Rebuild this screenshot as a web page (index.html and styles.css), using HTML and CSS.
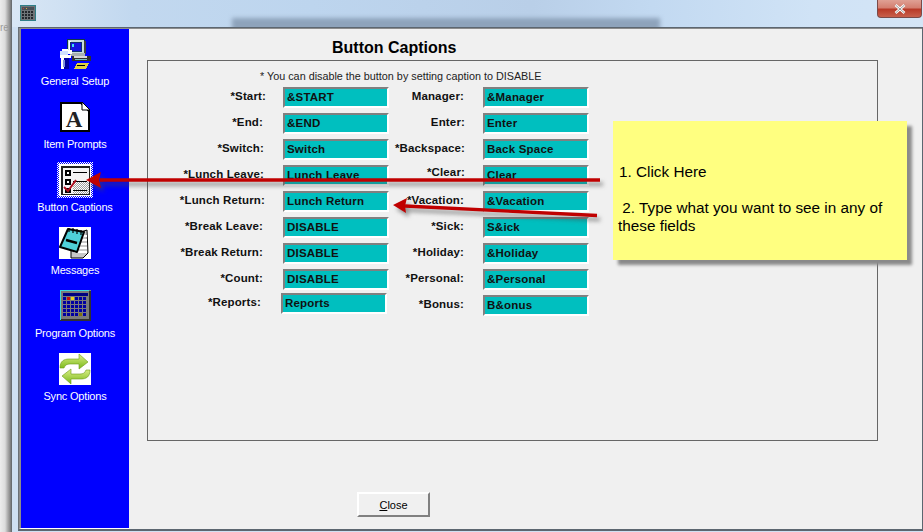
FILE: index.html
```html
<!DOCTYPE html>
<html lang="en">
<head>
<meta charset="utf-8">
<title>Button Captions</title>
<link rel="stylesheet" href="styles.css">
</head>
<body>
<div class="shell">
  <div class="behind"><span class="behind-text">re</span></div>
  <div class="window">
    <header class="titlebar">
      <div class="title-blur"></div>
      <svg class="app-icon" width="16" height="16" viewBox="0 0 16 16" shape-rendering="crispEdges">
        <rect width="16" height="16" fill="#2f7f88"/>
        <rect x="1" y="1" width="14" height="14" fill="#6f7477"/>
        <rect x="2" y="2" width="12" height="3" fill="#4a4f55"/>
        <rect x="3" y="3" width="1" height="1" fill="#c04030"/><rect x="6" y="3" width="1" height="1" fill="#d0b040"/>
        <g fill="#23272c">
          <rect x="2" y="6" width="2" height="2"/><rect x="5" y="6" width="2" height="2"/><rect x="8" y="6" width="2" height="2"/><rect x="11" y="6" width="2" height="2"/>
          <rect x="2" y="9" width="2" height="2"/><rect x="5" y="9" width="2" height="2"/><rect x="8" y="9" width="2" height="2"/><rect x="11" y="9" width="2" height="2"/>
          <rect x="2" y="12" width="2" height="2"/><rect x="5" y="12" width="2" height="2"/><rect x="8" y="12" width="2" height="2"/><rect x="11" y="12" width="2" height="2"/>
        </g>
      </svg>
      <div class="win-close">
        <svg width="12" height="10" viewBox="0 0 12 10"><path d="M1.5 1 L10.5 9 M10.5 1 L1.5 9" stroke="#fff" stroke-width="2.6"/><path d="M1.5 1 L10.5 9 M10.5 1 L1.5 9" stroke="#6b6b6b" stroke-width=".7"/></svg>
      </div>
    </header>
    <div class="frame">
      <div class="client">
        <nav class="sidebar">
          <div class="nav-item">
            <div class="nav-icon">
              <svg width="32" height="32" viewBox="0 0 32 32" shape-rendering="crispEdges">
                <rect x="8" y="1" width="18" height="15" fill="#103848"/>
                <rect x="9" y="2" width="16" height="13" fill="#c8dede"/>
                <rect x="10" y="3" width="2" height="11" fill="#fff"/>
                <rect x="11" y="4" width="12" height="10" fill="#103070"/>
                <rect x="12" y="5" width="10" height="8" fill="#1414e0"/>
                <rect x="13" y="6" width="2" height="3" fill="#40e0f0"/>
                <rect x="25" y="3" width="2" height="13" fill="#404040"/>
                <rect x="11" y="15" width="15" height="3" fill="#a8b0b0"/>
                <rect x="13" y="18" width="19" height="5" fill="#303030"/>
                <rect x="15" y="18" width="13" height="2" fill="#d8d8d8"/>
                <rect x="16" y="21" width="12" height="1" fill="#80c0c0"/>
                <path d="M18 25 H30 L27 31 H15 Z" fill="#e0d040"/>
                <rect x="18" y="27" width="8" height="1" fill="#000"/>
                <rect x="1" y="13" width="8" height="4" fill="#d0e0ff"/>
                <rect x="3" y="11" width="6" height="2" fill="#fff"/>
                <rect x="9" y="12" width="4" height="4" fill="#fff"/>
                <rect x="1" y="17" width="11" height="3" fill="#fff"/>
                <rect x="2" y="20" width="6" height="11" fill="#fff"/>
                <rect x="5" y="20" width="5" height="11" fill="#0000a0"/>
                <rect x="4" y="22" width="2" height="7" fill="#8090e0"/>
              </svg>
            </div>
            <span class="nav-label">General Setup</span>
          </div>
          <div class="nav-item">
            <div class="nav-icon">
              <svg width="32" height="32" viewBox="0 0 32 32">
                <path d="M2 2 H22 L30 10 V30 H2 Z" fill="#fff" stroke="#000" stroke-width="2"/>
                <path d="M23 1 V9 H31 L31 1 Z" fill="#0000ff"/>
                <path d="M23 1 L31 9 H23 Z" fill="#fff" stroke="#000" stroke-width="1"/>
                <text x="15" y="26" class="glyph-a">A</text>
              </svg>
            </div>
            <span class="nav-label">Item Prompts</span>
          </div>
          <div class="nav-item">
            <div class="nav-icon">
              <svg class="tall-icon" width="36" height="36" viewBox="0 0 36 36" shape-rendering="crispEdges">
                <defs>
                  <pattern id="chk" width="2" height="2" patternUnits="userSpaceOnUse">
                    <rect width="2" height="2" fill="#fff"/><rect width="1" height="1" fill="#0000ff"/><rect x="1" y="1" width="1" height="1" fill="#0000ff"/>
                  </pattern>
                  <pattern id="gry" width="2" height="2" patternUnits="userSpaceOnUse">
                    <rect width="2" height="2" fill="#fff"/><rect width="1" height="1" fill="#a0a0a0"/><rect x="1" y="1" width="1" height="1" fill="#a0a0a0"/>
                  </pattern>
                </defs>
                <rect width="36" height="36" fill="url(#chk)"/>
                <rect x="2" y="2" width="32" height="32" fill="#fff"/>
                <rect x="4" y="4" width="29" height="29" fill="#202020"/>
                <rect x="6" y="6" width="26" height="26" fill="#f4f4f4"/>
                <rect x="16" y="20" width="16" height="12" fill="url(#gry)"/>
                <rect x="8" y="8" width="6" height="6" fill="#000"/><rect x="10" y="10" width="2" height="2" fill="#fff"/>
                <rect x="8" y="17" width="6" height="6" fill="#000"/><rect x="10" y="19" width="2" height="2" fill="#fff"/>
                <rect x="8" y="26" width="6" height="5" fill="#000"/>
                <rect x="16" y="10" width="14" height="1" fill="#000"/>
                <rect x="16" y="19" width="14" height="1" fill="#000"/>
                <rect x="16" y="28" width="14" height="1" fill="#000"/>
                <path d="M7 25 L11 29 L19 18" fill="none" stroke="#b01020" stroke-width="2" shape-rendering="auto"/>
              </svg>
            </div>
            <span class="nav-label">Button Captions</span>
          </div>
          <div class="nav-item">
            <div class="nav-icon">
              <svg width="32" height="32" viewBox="0 0 32 32">
                <rect width="32" height="32" fill="#fff"/>
                <path d="M12 8 L28 3 L29 26 L24 31 H12 Z" fill="#c8c8c8" stroke="#000" stroke-width="1"/>
                <path d="M19 9 H28 M18 13 H28 M17 17 H28 M16 21 H28 M15 25 H28" stroke="#fff" stroke-width="2"/>
                <path d="M9 2 L25 5 L18 25 L1 20 Z" fill="#4fd0d8" stroke="#000" stroke-width="2" stroke-linejoin="round"/>
                <path d="M7 13 L18 16" stroke="#000" stroke-width="2.4"/>
                <path d="M10 1 V5 M14 1 V6 M18 2 V7 M22 3 V8" stroke="#000" stroke-width="1.2"/>
              </svg>
            </div>
            <span class="nav-label">Messages</span>
          </div>
          <div class="nav-item">
            <div class="nav-icon">
              <svg class="cal-icon" width="32" height="32" viewBox="0 0 32 32" shape-rendering="crispEdges">
                <rect x="1" y="0" width="31" height="31" fill="#7a7a7a"/>
                <rect x="30" y="1" width="2" height="30" fill="#303030"/>
                <rect x="1" y="29" width="31" height="2" fill="#303030"/>
                <rect x="1" y="0" width="29" height="1" fill="#40d8e0"/>
                <rect x="1" y="0" width="1" height="30" fill="#40d8e0"/>
                <rect x="4" y="3" width="25" height="3" fill="#000080"/>
                <g fill="#0000a0" transform="translate(1 0)">
                  <rect x="3" y="7" width="3" height="3"/><rect x="7" y="7" width="3" height="3" fill="#c01010"/><rect x="11" y="7" width="3" height="3" fill="#e8d020"/><rect x="15" y="7" width="3" height="3"/><rect x="19" y="7" width="3" height="3"/><rect x="23" y="7" width="3" height="3"/>
                  <rect x="3" y="11" width="3" height="3"/><rect x="7" y="11" width="3" height="3"/><rect x="11" y="11" width="3" height="3"/><rect x="15" y="11" width="3" height="3"/><rect x="19" y="11" width="3" height="3"/><rect x="23" y="11" width="3" height="3"/>
                  <rect x="3" y="15" width="3" height="3"/><rect x="7" y="15" width="3" height="3"/><rect x="11" y="15" width="3" height="3"/><rect x="15" y="15" width="3" height="3"/><rect x="19" y="15" width="3" height="3"/><rect x="23" y="15" width="3" height="3"/>
                  <rect x="3" y="19" width="3" height="3"/><rect x="7" y="19" width="3" height="3"/><rect x="11" y="19" width="3" height="3"/><rect x="15" y="19" width="3" height="3"/><rect x="19" y="19" width="3" height="3"/><rect x="23" y="19" width="3" height="3"/>
                  <rect x="3" y="23" width="3" height="3"/><rect x="7" y="23" width="3" height="3"/><rect x="11" y="23" width="3" height="3"/><rect x="15" y="23" width="3" height="3"/><rect x="19" y="23" width="3" height="3" fill="#807010"/><rect x="23" y="23" width="3" height="3"/>
                </g>
              </svg>
            </div>
            <span class="nav-label">Program Options</span>
          </div>
          <div class="nav-item">
            <div class="nav-icon">
              <svg width="32" height="32" viewBox="0 0 32 32">
                <defs>
                  <linearGradient id="grn" x1="0" y1="0" x2="0" y2="1"><stop offset="0" stop-color="#dcf088"/><stop offset="1" stop-color="#78b818"/></linearGradient>
                </defs>
                <rect width="32" height="32" fill="#fff"/>
                <path d="M1 15 C1 8 5 6 10 6 H20 V1 L29 9 L20 16 V11 H11 C8 11 6 12 5 15 Z" fill="url(#grn)" stroke="#6c9a18" stroke-width=".6"/>
                <path d="M31 17 C31 24 27 26 22 26 H12 V31 L3 23 L12 16 V21 H21 C24 21 26 20 27 17 Z" fill="url(#grn)" stroke="#6c9a18" stroke-width=".6"/>
              </svg>
            </div>
            <span class="nav-label">Sync Options</span>
          </div>
        </nav>
        <main class="content">
          <h1 class="heading">Button Captions</h1>
          <section class="group">
            <p class="hint">* You can disable the button by setting caption to DISABLE</p>
            <div class="fields">
              <label class="cap r0">*Start:</label><div class="field">&amp;START</div>
              <label class="cap cap2 r1">Manager:</label><div class="field">&amp;Manager</div>
              <label class="cap r3">*End:</label><div class="field">&amp;END</div>
              <label class="cap cap2">Enter:</label><div class="field">Enter</div>
              <label class="cap r1">*Switch:</label><div class="field">Switch</div>
              <label class="cap cap2">*Backspace:</label><div class="field">Back Space</div>
              <label class="cap r1">*Lunch Leave:</label><div class="field">Lunch Leave</div>
              <label class="cap cap2 up">*Clear:</label><div class="field">Clear</div>
              <label class="cap r2">*Lunch Return:</label><div class="field">Lunch Return</div>
              <label class="cap cap2 r1">*Vacation:</label><div class="field">&amp;Vacation</div>
              <label class="cap r3">*Break Leave:</label><div class="field">DISABLE</div>
              <label class="cap cap2 r1">*Sick:</label><div class="field">S&amp;ick</div>
              <label class="cap r3">*Break Return:</label><div class="field">DISABLE</div>
              <label class="cap cap2 r1">*Holiday:</label><div class="field">&amp;Holiday</div>
              <label class="cap r3">*Count:</label><div class="field">DISABLE</div>
              <label class="cap cap2 r1">*Personal:</label><div class="field">&amp;Personal</div>
              <label class="cap r5 up">*Reports:</label><div class="field field-off">Reports</div>
              <label class="cap cap2 r1">*Bonus:</label><div class="field">B&amp;onus</div>
            </div>
          </section>
          <button class="close-btn" type="button"><u>C</u>lose</button>
        </main>
      </div>
    </div>
  </div>
</div>
<aside class="note">
  <p class="note-one">1. Click Here</p>
  <p class="note-two">&nbsp;2. Type what you want to see in any of these fields</p>
</aside>
<svg class="arrows" width="923" height="532" viewBox="0 0 923 532">
  <g class="arrow-set">
    <path d="M600 180 H100" stroke="#c00000" stroke-width="3.4" fill="none"/>
    <path d="M86 180 L101 172 L99 180 L101 188 Z" fill="#c00000"/>
    <path d="M597 215.5 L405 206" stroke="#c00000" stroke-width="3.4" fill="none"/>
    <path d="M393 205 L407 198 L405 206 L406 213 Z" fill="#c00000"/>
  </g>
</svg>
</body>
</html>
```
FILE: styles.css
```css
* { box-sizing: border-box; }
html, body { margin: 0; height: 100%; }
body {
  position: relative;
  width: 923px;
  height: 532px;
  overflow: hidden;
  font-family: "Liberation Sans", Arial, sans-serif;
  background: #cfe0f2;
}
.shell { display: flex; height: 532px; }
.behind {
  width: 12px;
  flex: none;
  padding-top: 22px;
  overflow: hidden;
  background: linear-gradient(90deg, #ececec 0, #dcdcdc 5px, #a8a8a8 8px, #8a8a8a 10px, #5e6468 12px);
}
.behind-text { font-size: 10px; line-height: 12px; color: #9a9a9a; display: block; }
.window { flex: 1; display: flex; flex-direction: column; min-width: 0; }
.titlebar {
  position: relative;
  height: 27px;
  flex: none;
  display: flex;
  align-items: flex-start;
  justify-content: space-between;
  padding: 5px 1px 0 8px;
  overflow: hidden;
  background: linear-gradient(90deg, #d9e7f5 0, #c2d8ef 120px, #bdd5ee 300px, #b9cfe8 520px, #c2d9f1 640px, #d0e3f6 800px, #d4e5f6 911px);
}
.title-blur {
  position: absolute;
  left: 220px;
  top: 18px;
  width: 428px;
  height: 14px;
  background: #8ea3bb;
  filter: blur(2px);
}
.app-icon { position: relative; }
.win-close {
  position: relative;
  width: 45px;
  height: 18px;
  margin-top: -5px;
  display: flex;
  align-items: center;
  justify-content: center;
  border: 1px solid #7a4a48;
  border-top: 0;
  border-radius: 0 0 4px 4px;
  background: linear-gradient(180deg, #dfa094 0, #d47f70 45%, #b83a28 55%, #c8604c 100%);
}
.frame { flex: 1; display: flex; padding: 0 0 1px 6px; min-height: 0; }
.client {
  flex: 1;
  display: flex;
  min-width: 0;
  border-top: 1px solid #5c6670;
  border-left: 1px solid #6a7178;
  border-right: 1px solid #5c6670;
  border-bottom: 2px solid #5c6670;
  background: #f0f0f0;
  box-shadow: inset 0 1px 0 #8c8c8c;
}
.sidebar {
  width: 110px;
  flex: none;
  padding-top: 9px;
  display: flex;
  flex-direction: column;
  background: #0000ff;
  border-top: 1px solid #8c8c8c;
  border-left: 2px solid #8c8c8c;
  border-bottom: 1px solid #fff;
}
.nav-item {
  height: 63px;
  flex: none;
  display: flex;
  flex-direction: column;
  align-items: center;
}
.nav-icon {
  width: 32px;
  height: 32px;
  margin-bottom: 4px;
  display: flex;
  align-items: center;
  justify-content: center;
  overflow: visible;
}
.nav-icon svg { flex: none; display: block; }
.nav-label { font-size: 11px; line-height: 14px; letter-spacing: -.2px; color: #fff; white-space: nowrap; }
.glyph-a { font: bold 23px "Liberation Serif", serif; fill: #222; text-anchor: middle; }
.content { flex: 1; min-width: 0; display: flex; flex-direction: column; align-items: flex-start; }
.heading {
  margin: 0;
  height: 32px;
  padding: 11px 0 0 203px;
  font-size: 16px;
  line-height: 18px;
  font-weight: bold;
  color: #000;
}
.group {
  width: 731px;
  height: 381px;
  margin-left: 18px;
  border: 1px solid #666;
  padding-top: 9px;
}
.hint {
  margin: 0 0 5px;
  padding-left: 112px;
  font-size: 10.8px;
  line-height: 12px;
  color: #222;
}
.fields {
  display: grid;
  grid-template-columns: 135px 106px 94px 106px;
  grid-auto-rows: 26px;
}
.cap {
  height: 21px;
  padding-right: 17px;
  text-align: right;
  font-size: 11.5px;
  line-height: 19px;
  font-weight: bold;
  letter-spacing: .15px;
  color: #111;
  white-space: nowrap;
}
.cap2 { padding-right: 18px; }
.r1 { padding-right: 19px; }
.r2 { padding-right: 18px; }
.r3 { padding-right: 20px; }
.r5 { padding-right: 22px; }
.up { line-height: 15px; }
.field {
  height: 21px;
  padding-left: 2px;
  border: 2px solid;
  border-color: #808080 #fff #fff #808080;
  background: #00bfbf;
  font-size: 11.5px;
  line-height: 16px;
  font-weight: bold;
  letter-spacing: .2px;
  color: #111;
  white-space: nowrap;
  overflow: hidden;
}
.field-off { width: 106px; margin: -2px 0 0 -2px; }
.close-btn {
  width: 73px;
  height: 25px;
  margin: 51px 0 0 228px;
  padding: 0;
  border: 2px solid;
  border-color: #fff #808080 #808080 #fff;
  background: #f0f0f0;
  font: 11px "Liberation Sans", Arial, sans-serif;
  color: #000;
}
.note {
  position: absolute;
  left: 613px;
  top: 121px;
  width: 294px;
  height: 139px;
  padding: 42px 5px 0 5px;
  background: #ffff80;
  box-shadow: 5px 5px 3px #8a8a8a;
  font-size: 15.3px;
  line-height: 18px;
  color: #000;
}
.note p { margin: 0; }
.note-one { padding-left: 1px; }
.note-two { padding-top: 18px; }
.arrows { position: absolute; left: 0; top: 0; pointer-events: none; }
.arrow-set { filter: drop-shadow(3px 4px 2px rgba(70,70,70,.55)); }
```
